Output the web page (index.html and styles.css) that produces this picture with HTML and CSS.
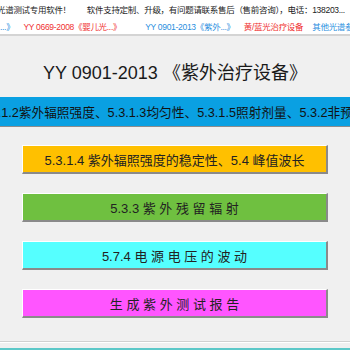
FILE: index.html
```html
<!DOCTYPE html>
<html lang="zh-CN">
<head>
    <meta charset="UTF-8">
    <meta name="viewport" content="width=device-width, initial-scale=1.0">
    <title>YY 0901-2013 紫外治疗设备</title>
    <link rel="stylesheet" href="styles.css">
</head>
<body>
    <div class="window">
        <!-- 顶部滚动信息 -->
        <div class="header">
            <div class="notice">
                <span class="scroll">光谱测试专用软件！</span>
                <span>软件支持定制、升级，有问题请联系售后（售前咨询），电话：138203...</span>
            </div>
            <div class="links">
                <span class="link blue">...》</span>
                <span class="link red">YY 0669-2008《婴儿光...》</span>
                <span class="link blue wide">YY 0901-2013《紫外...》</span>
                <span class="link red">黄/蓝光治疗设备</span>
                <span class="link blue">其他光谱参数</span>
            </div>
        </div>

        <div class="title">YY 0901-2013 《紫外治疗设备》</div>

        <div class="banner">
            <span class="banner-text">5.3.1.2紫外辐照强度、5.3.1.3均匀性、5.3.1.5照射剂量、5.3.2非预期辐射</span>
        </div>

        <div class="buttons">
            <button class="btn orange">5.3.1.4 紫外辐照强度的稳定性、5.4 峰值波长</button>
            <button class="btn green">5.3.3 紫 外 残 留 辐 射</button>
            <button class="btn cyan">5.7.4 电 源 电 压 的 波 动</button>
            <button class="btn magenta">生 成 紫 外 测 试 报 告</button>
        </div>

        <div class="footer"></div>
    </div>
</body>
</html>
```

FILE: styles.css
```css
* {
    margin: 0;
    padding: 0;
    box-sizing: border-box;
}

body {
    font-family: 'Liberation Sans', 'Noto Sans CJK SC', sans-serif;
    background-color: #f0f0f0;
    width: 350px;
    height: 350px;
    overflow: hidden;
}

.window {
    height: 350px;
    display: flex;
    flex-direction: column;
}

.header {
    height: 36px;
    background-color: #fff;
    border-bottom: 2px solid #d4d4d4;
    font-size: 8.5px;
    letter-spacing: -0.3px;
    overflow: hidden;
    white-space: nowrap;
}

.notice {
    height: 17px;
    display: flex;
    align-items: center;
    gap: 16px;
    color: #222;
}

.scroll {
    margin-left: -3px;
}

.links {
    height: 17px;
    display: flex;
    align-items: center;
    gap: 9px;
}

.blue {
    color: #2a8fe0;
}

.red {
    color: #f03030;
}

.wide {
    margin-left: 15px;
}

.title {
    height: 61px;
    padding-top: 8px;
    display: flex;
    align-items: center;
    justify-content: center;
    font-size: 18px;
    color: #1a1a1a;
}

.banner {
    height: 30px;
    background-color: #0aa0e2;
    border-bottom: 1px solid #8c8c8c;
    display: flex;
    align-items: center;
    overflow: hidden;
    white-space: nowrap;
}

.banner-text {
    margin-left: -20px;
    font-size: 12.7px;
    color: #111;
}

.buttons {
    padding: 18px 22px 0 22px;
    display: flex;
    flex-direction: column;
    gap: 19px;
}

.btn {
    width: 306px;
    height: 29px;
    border-top: 1px solid #fff;
    border-left: 1px solid #fff;
    border-right: 2px solid #8a8a8a;
    border-bottom: 2px solid #8a8a8a;
    font-family: 'Liberation Sans', 'Noto Sans CJK SC', sans-serif;
    font-size: 13px;
    color: #222;
    cursor: pointer;
}

.orange {
    background-color: #ffc000;
}

.green {
    background-color: #6fc040;
}

.cyan {
    background-color: #55ffff;
}

.magenta {
    background-color: #ff55ff;
}

.footer {
    margin-top: auto;
    height: 9px;
    border-top: 1px solid #d0d0d0;
    box-shadow: inset 0 1px 0 #fff;
    border-bottom: 2px solid #5cc8c8;
}
```
